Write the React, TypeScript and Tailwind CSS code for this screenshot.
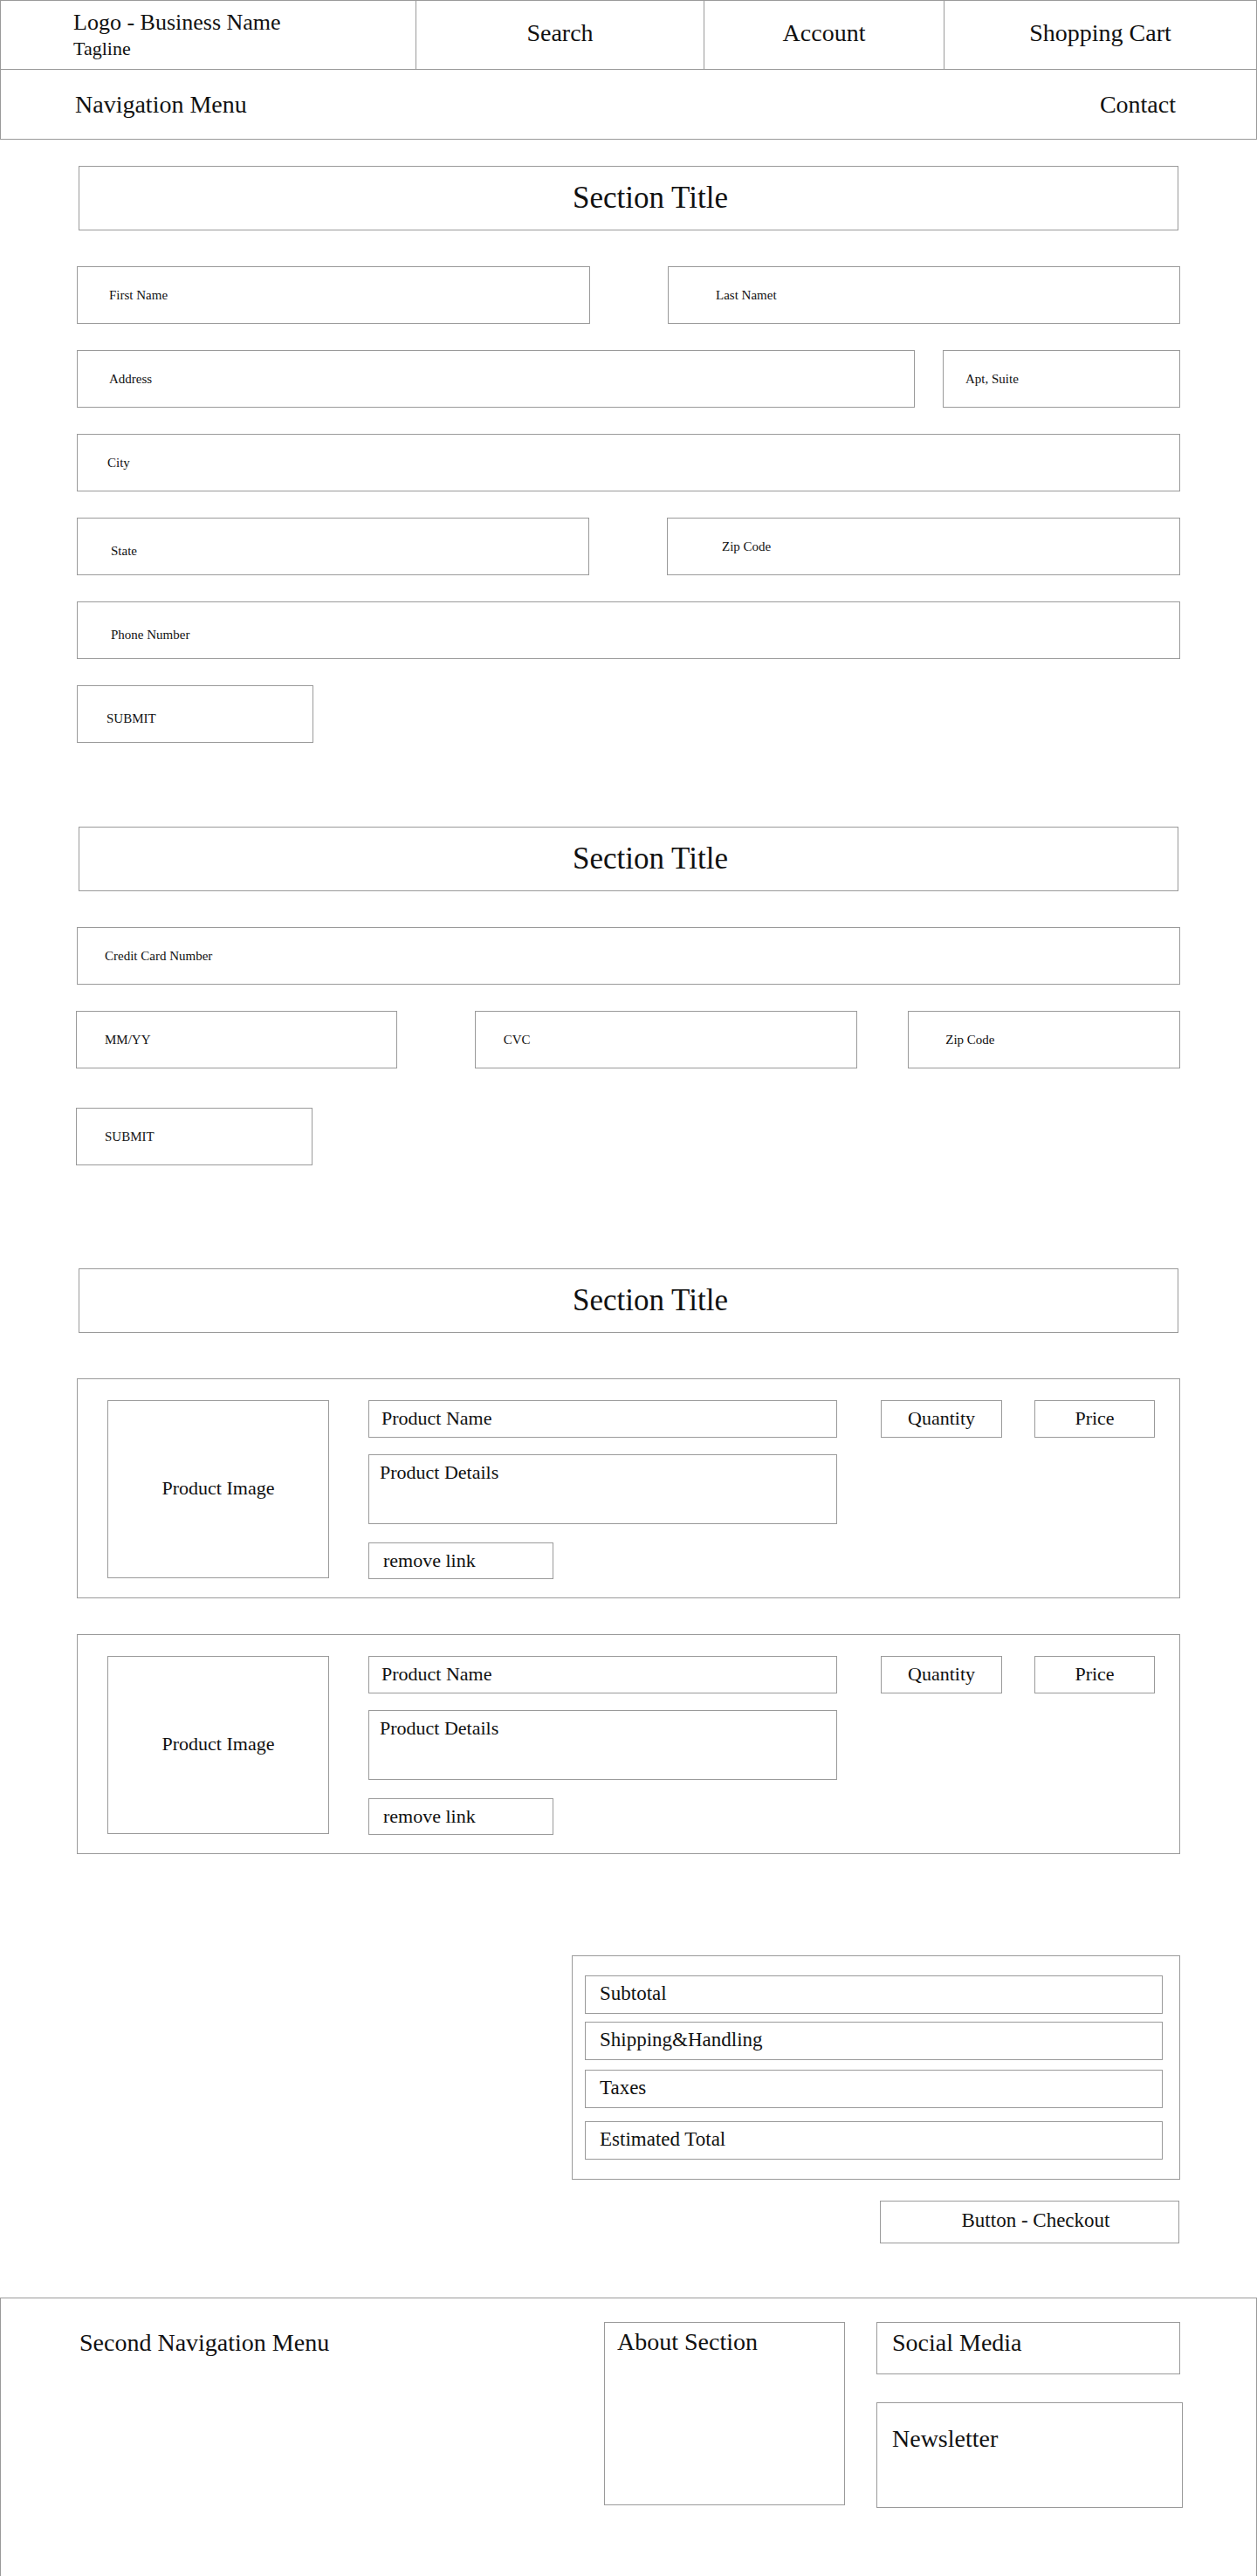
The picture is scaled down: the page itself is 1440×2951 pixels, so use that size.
import React from "react";

const box = "border border-[#9a9a9a] bg-white";

function Field({ label, className = "", pad = "pl-[36px]" }: { label: string; className?: string; pad?: string }) {
  return (
    <div className={`${box} h-[66px] flex items-center ${pad} text-[15px] ${className}`}>
      <span>{label}</span>
    </div>
  );
}

function SectionTitle() {
  return (
    <div className={`${box} mx-[2px] h-[74px] flex items-center justify-center pl-[50px] text-[35px]`}>
      Section Title
    </div>
  );
}

function ProductCard() {
  return (
    <div className={`${box} h-[252px] flex pl-[34px] pt-[24px]`}>
      <div className={`${box} w-[254px] h-[204px] flex items-center justify-center pb-[4px] text-[22px]`}>Product Image</div>
      <div className="ml-[45px] w-[537px] flex flex-col">
        <div className={`${box} h-[43px] flex items-center pl-[14px] pb-[2px] text-[22px]`}>Product Name</div>
        <div className={`${box} mt-[19px] h-[80px] pl-[12px] pt-[6px] text-[22px] leading-tight`}>Product Details</div>
        <div className={`${box} mt-[21px] w-[212px] h-[42px] flex items-center pl-[16px] pb-[2px] text-[22px]`}>remove link</div>
      </div>
      <div className={`${box} ml-[50px] w-[139px] h-[43px] flex items-center justify-center pb-[2px] text-[22px]`}>Quantity</div>
      <div className={`${box} ml-[37px] w-[138px] h-[43px] flex items-center justify-center pb-[2px] text-[22px]`}>Price</div>
    </div>
  );
}

function SummaryRow({ label, className = "" }: { label: string; className?: string }) {
  return (
    <div className={`${box} h-[44px] flex items-center pl-[16px] pb-[2px] text-[23px] ${className}`}>{label}</div>
  );
}

export default function App() {
  return (
    <div className="w-[1440px] min-h-[2951px] bg-white text-[#111] font-['Liberation_Serif','Times_New_Roman',serif]">
      {/* Header */}
      <header className="border border-[#9a9a9a]">
        <div className="flex h-[78px]">
          <div className="w-[475px] pl-[83px] pt-[10px] flex flex-col">
            <span className="text-[26px] leading-[30px]">Logo - Business Name</span>
            <span className="text-[22px] leading-[30px]">Tagline</span>
          </div>
          <div className="w-[330px] border-l border-[#9a9a9a] flex items-center justify-center text-[28px] pb-[4px]">Search</div>
          <div className="w-[275px] border-l border-[#9a9a9a] flex items-center justify-center text-[28px] pb-[4px]">Account</div>
          <div className="flex-1 border-l border-[#9a9a9a] flex items-center justify-center text-[28px] pb-[4px]">Shopping Cart</div>
        </div>
        <div className="h-[80px] border-t border-[#9a9a9a] flex items-center justify-between pl-[85px] pr-[92px] text-[28px]">
          <span className="w-[206px]">Navigation Menu</span>
          <span>Contact</span>
        </div>
      </header>

      <main className="px-[88px]">
        {/* Shipping form */}
        <div className="mt-[30px]">
          <SectionTitle />
        </div>
        <div className="mt-[41px] flex justify-between">
          <Field label="First Name" className="w-[588px]" />
          <Field label="Last Namet" className="w-[587px]" pad="pl-[54px]" />
        </div>
        <div className="mt-[30px] flex justify-between">
          <Field label="Address" className="w-[960px]" />
          <Field label="Apt, Suite" className="w-[272px]" pad="pl-[25px]" />
        </div>
        <Field label="City" className="mt-[30px]" pad="pl-[34px]" />
        <div className="mt-[30px] flex justify-between">
          <Field label="State" className="w-[587px]" pad="pl-[38px] pt-[10px]" />
          <Field label="Zip Code" className="w-[588px]" pad="pl-[62px]" />
        </div>
        <Field label="Phone Number" className="mt-[30px]" pad="pl-[38px] pt-[10px]" />
        <Field label="SUBMIT" className="mt-[30px] w-[271px]" pad="pl-[33px] pt-[10px]" />

        {/* Payment form */}
        <div className="mt-[96px]">
          <SectionTitle />
        </div>
        <Field label="Credit Card Number" className="mt-[41px]" pad="pl-[31px]" />
        <div className="mt-[30px] flex">
          <Field label="MM/YY" className="w-[368px] -ml-[1px]" pad="pl-[32px]" />
          <Field label="CVC" className="ml-[89px] w-[439px]" pad="pl-[32px]" />
          <Field label="Zip Code" className="ml-[58px] w-[312px]" pad="pl-[42px]" />
        </div>
        <Field label="SUBMIT" className="mt-[45px] w-[271px] -ml-[1px]" pad="pl-[32px]" />

        {/* Cart */}
        <div className="mt-[118px]">
          <SectionTitle />
        </div>
        <div className="mt-[52px]">
          <ProductCard />
        </div>
        <div className="mt-[41px]">
          <ProductCard />
        </div>

        {/* Summary */}
        <div className="mt-[116px] flex flex-col items-end">
          <div className={`${box} w-[697px] h-[257px] pl-[14px] pr-[19px] pt-[22px]`}>
            <SummaryRow label="Subtotal" />
            <SummaryRow label="Shipping&Handling" className="mt-[9px]" />
            <SummaryRow label="Taxes" className="mt-[11px]" />
            <SummaryRow label="Estimated Total" className="mt-[15px]" />
          </div>
          <button className={`${box} mt-[24px] mr-[1px] w-[343px] h-[49px] flex items-center justify-center pl-[14px] pb-[2px] text-[23px]`}>
            Button - Checkout
          </button>
        </div>
      </main>

      {/* Footer */}
      <footer className="mt-[62px] h-[320px] border border-[#9a9a9a] flex pl-[90px] pt-[27px]">
        <div className="w-[601px] pt-[7px] text-[28px] leading-[34px]">Second Navigation Menu</div>
        <div className={`${box} w-[276px] h-[210px] pl-[14px] pt-[5px] text-[28px] leading-[34px]`}>About Section</div>
        <div className="ml-[36px] w-[351px] flex flex-col">
          <div className={`${box} w-[348px] h-[60px] pl-[17px] pt-[6px] text-[28px] leading-[34px]`}>Social Media</div>
          <div className={`${box} mt-[32px] h-[121px] pl-[17px] pt-[24px] text-[28px] leading-[34px]`}>Newsletter</div>
        </div>
      </footer>
    </div>
  );
}
